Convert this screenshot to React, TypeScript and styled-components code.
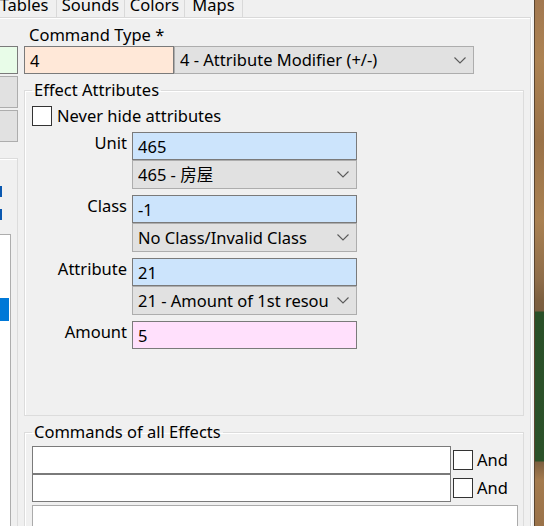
import React from "react";
import styled, { createGlobalStyle } from "styled-components";

const Global = createGlobalStyle`
  html, body { margin: 0; padding: 0; background: #f0f0f0; }
  body { font-family: "Noto Sans", "Noto Sans CJK SC", sans-serif; font-size: 16.5px; color: #000; }
  #root { width: 544px; height: 526px; overflow: hidden; }
`;

const Screen = styled.div`
  display: flex;
  width: 544px;
  height: 526px;
  overflow: hidden;
`;

const Window = styled.div`
  width: 534px;
  flex: none;
  display: flex;
  flex-direction: column;
  background: #f0f0f0;
`;

const Wood = styled.div`
  flex: 1;
  border-left: 1px solid #5a4530;
  background-color: #a07850;
  background-image: linear-gradient(180deg,
      #a27850 0px, #ad8353 60px, #9a7248 140px, #aa8152 220px,
      #8e6d4a 280px, #7d6040 300px, #7a5e40 311px,
      #2a5028 312px, #2c5229 461px,
      #7d6040 462px, #a47b4e 480px, #9a7249 526px);
`;

const TabBar = styled.div`
  height: 17px;
  flex: none;
  display: flex;
  align-items: flex-end;
  overflow: hidden;
`;

const Tab = styled.div<{ $w: number; $first?: boolean }>`
  width: ${(p) => p.$w}px;
  flex: none;
  height: 30px;
  margin-left: ${(p) => (p.$first ? -8 : 0)}px;
  border-right: 1px solid #d9d9d9;
  box-sizing: border-box;
  display: flex;
  justify-content: center;
  align-items: flex-end;
  line-height: 24px;
  white-space: nowrap;
`;

const Pane = styled.div`
  flex: 1;
  width: 531px;
  box-sizing: border-box;
  border-top: 1px solid #d9d9d9;
  border-right: 1px solid #d9d9d9;
  box-shadow: inset 0 1px 0 #fff, 1px 0 0 #fff;
  display: flex;
  min-height: 0;
  overflow: hidden;
`;

const LeftStrip = styled.div`
  width: 18px;
  flex: none;
  display: flex;
  flex-direction: column;
  overflow: hidden;
`;

const GreenBox = styled.div`
  margin-top: 28px;
  margin-left: -10px;
  width: 28px;
  height: 28px;
  flex: none;
  box-sizing: border-box;
  border: 1px solid #7a7a7a;
  background: #e8fce8;
`;

const StripButton = styled.div<{ $top: number }>`
  margin-top: ${(p) => p.$top}px;
  margin-left: -10px;
  width: 28px;
  height: 32px;
  flex: none;
  box-sizing: border-box;
  border: 1px solid #adadad;
  background: #e1e1e1;
`;

const StripGroup = styled.div`
  margin-top: 16px;
  flex: 1;
  border-top: 1px solid #dcdcdc;
  border-right: 1px solid #dcdcdc;
  box-shadow: inset 0 1px 0 #fff;
  display: flex;
  flex-direction: column;
`;

const BlueMark = styled.div<{ $top: number }>`
  margin-top: ${(p) => p.$top}px;
  width: 2px;
  height: 11px;
  flex: none;
  background: #0a58b0;
`;

const StripList = styled.div`
  margin-top: 14px;
  margin-left: -10px;
  width: 21px;
  flex: 1;
  box-sizing: border-box;
  border: 1px solid #adadad;
  border-bottom: none;
  background: #fff;
  display: flex;
  flex-direction: column;
`;

const StripSelection = styled.div`
  margin-top: 63px;
  width: 18px;
  height: 23px;
  background: #0078d7;
`;

const Main = styled.div`
  margin-left: 6px;
  width: 500px;
  flex: none;
  display: flex;
  flex-direction: column;
`;

const TopLabel = styled.div`
  margin-top: 6px;
  padding-left: 5px;
  height: 22px;
  flex: none;
  line-height: 22px;
`;

const CommandRow = styled.div`
  display: flex;
  height: 28px;
  flex: none;
  margin-bottom: 6px;
`;

const TextBox = styled.div<{ $bg: string; $w?: number; $border?: string }>`
  ${(p) => (p.$w ? `width: ${p.$w}px;` : "")}
  height: 28px;
  flex: none;
  box-sizing: border-box;
  border: 1px solid ${(p) => p.$border || "#7a7a7a"};
  background: ${(p) => p.$bg};
  padding-left: 5px;
  line-height: 27px;
  white-space: nowrap;
  overflow: hidden;
`;

const Combo = styled.div<{ $w?: number; $h?: number }>`
  ${(p) => (p.$w ? `width: ${p.$w}px;` : "")}
  height: ${(p) => p.$h || 29}px;
  flex: none;
  box-sizing: border-box;
  border: 1px solid #adadad;
  background: #e1e1e1;
  display: flex;
  align-items: center;
  padding-left: 5px;
  padding-right: 7px;
  white-space: nowrap;
  overflow: hidden;
`;

const ComboText = styled.span`
  flex: 1;
  overflow: hidden;
  line-height: 26px;
`;

const Group = styled.fieldset<{ $h: number; $gap?: number }>`
  margin: ${(p) => p.$gap || 0}px 0 0 0;
  padding: 0 0 0 7px;
  height: ${(p) => p.$h}px;
  flex: none;
  box-sizing: border-box;
  border: 1px solid #dcdcdc;
  box-shadow: inset 1px 1px 0 #fff;
  min-width: 0;
`;

const Legend = styled.legend`
  margin-left: 0;
  padding: 0 2px;
  line-height: 20px;
  height: 20px;
`;

const CheckRow = styled.label<{ $top: number }>`
  display: flex;
  align-items: center;
  gap: 5px;
  margin-top: ${(p) => p.$top}px;
  height: 20px;
  line-height: 20px;
`;

const CheckBox = styled.span`
  width: 20px;
  height: 20px;
  box-sizing: border-box;
  border: 1px solid #333;
  background: #fff;
  flex: none;
`;

const FormGrid = styled.div`
  margin-top: 6px;
  display: grid;
  grid-template-columns: 95px 225px;
  column-gap: 5px;
  row-gap: 6px;
`;

const FieldLabel = styled.div`
  text-align: right;
  line-height: 22px;
  white-space: nowrap;
`;

const FieldStack = styled.div`
  display: flex;
  flex-direction: column;
`;

const CmdRows = styled.div`
  margin-top: 4px;
  display: flex;
  flex-direction: column;
`;

const CmdRow = styled.div`
  display: flex;
  align-items: center;
  gap: 2px;
`;

const AndLabel = styled.label`
  display: flex;
  align-items: center;
  gap: 4px;
  line-height: 20px;
`;

const BigBox = styled.div`
  margin-top: 3px;
  width: 486px;
  height: 40px;
  box-sizing: border-box;
  border: 1px solid #ababab;
  background: #fff;
`;

const Chevron = () => (
  <svg width="12" height="7" viewBox="0 0 12 7" style={{ flex: "none" }}>
    <path d="M0.5 0.5 L6 6 L11.5 0.5" fill="none" stroke="#5a5a5a" strokeWidth="1.1" />
  </svg>
);

const fields = [
  { label: "Unit", value: "465", option: "465 - 房屋", bg: "#cce4fc" },
  { label: "Class", value: "-1", option: "No Class/Invalid Class", bg: "#cce4fc" },
  { label: "Attribute", value: "21", option: "21 - Amount of 1st resou", bg: "#cce4fc" },
];

export default function App() {
  return (
    <>
      <Global />
      <Screen>
        <Window>
          <TabBar>
            <Tab $w={65} $first>Tables</Tab>
            <Tab $w={68}>Sounds</Tab>
            <Tab $w={60}>Colors</Tab>
            <Tab $w={58}>Maps</Tab>
          </TabBar>
          <Pane>
            <LeftStrip>
              <GreenBox />
              <StripButton $top={2} />
              <StripButton $top={2} />
              <StripGroup>
                <BlueMark $top={27} />
                <BlueMark $top={12} />
                <StripList>
                  <StripSelection />
                </StripList>
              </StripGroup>
            </LeftStrip>
            <Main>
              <TopLabel>Command Type *</TopLabel>
              <CommandRow>
                <TextBox $bg="#ffe8d8" $w={150}>4</TextBox>
                <Combo $w={300} $h={28}>
                  <ComboText>4 - Attribute Modifier (+/-)</ComboText>
                  <Chevron />
                </Combo>
              </CommandRow>
              <Group $h={336}>
                <Legend>Effect Attributes</Legend>
                <CheckRow $top={6}>
                  <CheckBox />
                  Never hide attributes
                </CheckRow>
                <FormGrid>
                  {fields.map((f) => (
                    <React.Fragment key={f.label}>
                      <FieldLabel>{f.label}</FieldLabel>
                      <FieldStack>
                        <TextBox $bg={f.bg}>{f.value}</TextBox>
                        <Combo>
                          <ComboText>{f.option}</ComboText>
                          <Chevron />
                        </Combo>
                      </FieldStack>
                    </React.Fragment>
                  ))}
                  <FieldLabel>Amount</FieldLabel>
                  <TextBox $bg="#ffe0fc">5</TextBox>
                </FormGrid>
              </Group>
              <Group $h={140} $gap={6}>
                <Legend>Commands of all Effects</Legend>
                <CmdRows>
                  <CmdRow>
                    <TextBox $bg="#fff" $w={419} />
                    <AndLabel>
                      <CheckBox />
                      And
                    </AndLabel>
                  </CmdRow>
                  <CmdRow>
                    <TextBox $bg="#fff" $w={419} />
                    <AndLabel>
                      <CheckBox />
                      And
                    </AndLabel>
                  </CmdRow>
                </CmdRows>
                <BigBox />
              </Group>
            </Main>
          </Pane>
        </Window>
        <Wood />
      </Screen>
    </>
  );
}
